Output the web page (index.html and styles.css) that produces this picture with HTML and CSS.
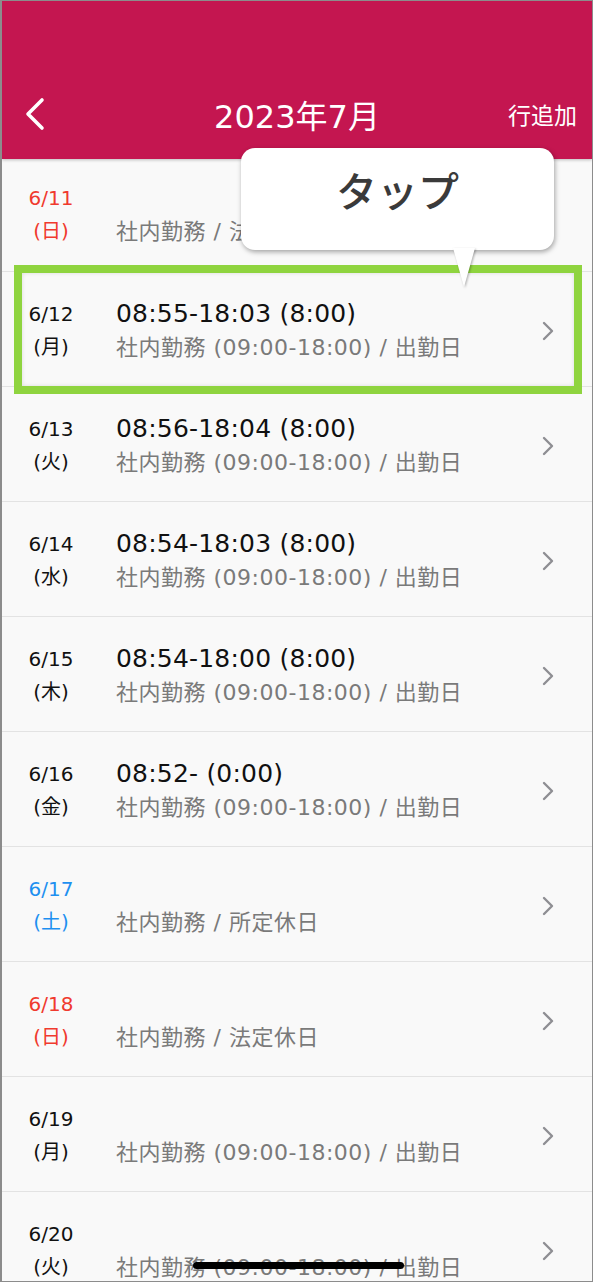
FILE: index.html
```html
<!DOCTYPE html>
<html lang="ja">
<head>
    <meta charset="UTF-8">
    <meta name="viewport" content="width=device-width, initial-scale=1">
    <title>勤怠 2023年7月</title>
    <link rel="stylesheet" href="styles.css">
</head>
<body>
    <div class="screen">
        <header class="topbar">
            <div class="nav">
                <div class="side">
                    <svg class="back" width="24" height="34" viewBox="0 0 24 34">
                        <path d="M19 3 L5 17 L19 31" fill="none" stroke="#fff" stroke-width="3.6" stroke-linecap="round" stroke-linejoin="round"/>
                    </svg>
                </div>
                <h1 class="title">2023年7月</h1>
                <div class="side right"><span class="add">行追加</span></div>
            </div>
        </header>

        <div class="list">
            <div class="row first">
                <div class="date sun"><span>6/11</span><span>(日)</span></div>
                <div class="info">
                    <div class="time"></div>
                    <div class="sub">社内勤務 / 法定休日</div>
                </div>
                <svg class="chev" width="14" height="22" viewBox="0 0 14 22"><path d="M3 3 L11 11 L3 19" fill="none" stroke="#8e8e93" stroke-width="2.4" stroke-linecap="round" stroke-linejoin="round"/></svg>
            </div>
            <div class="row picked">
                <div class="date"><span>6/12</span><span>(月)</span></div>
                <div class="info">
                    <div class="time">08:55-18:03 (8:00)</div>
                    <div class="sub">社内勤務 (09:00-18:00) / 出勤日</div>
                </div>
                <svg class="chev" width="14" height="22" viewBox="0 0 14 22"><path d="M3 3 L11 11 L3 19" fill="none" stroke="#8e8e93" stroke-width="2.4" stroke-linecap="round" stroke-linejoin="round"/></svg>
            </div>
            <div class="row">
                <div class="date"><span>6/13</span><span>(火)</span></div>
                <div class="info">
                    <div class="time">08:56-18:04 (8:00)</div>
                    <div class="sub">社内勤務 (09:00-18:00) / 出勤日</div>
                </div>
                <svg class="chev" width="14" height="22" viewBox="0 0 14 22"><path d="M3 3 L11 11 L3 19" fill="none" stroke="#8e8e93" stroke-width="2.4" stroke-linecap="round" stroke-linejoin="round"/></svg>
            </div>
            <div class="row">
                <div class="date"><span>6/14</span><span>(水)</span></div>
                <div class="info">
                    <div class="time">08:54-18:03 (8:00)</div>
                    <div class="sub">社内勤務 (09:00-18:00) / 出勤日</div>
                </div>
                <svg class="chev" width="14" height="22" viewBox="0 0 14 22"><path d="M3 3 L11 11 L3 19" fill="none" stroke="#8e8e93" stroke-width="2.4" stroke-linecap="round" stroke-linejoin="round"/></svg>
            </div>
            <div class="row">
                <div class="date"><span>6/15</span><span>(木)</span></div>
                <div class="info">
                    <div class="time">08:54-18:00 (8:00)</div>
                    <div class="sub">社内勤務 (09:00-18:00) / 出勤日</div>
                </div>
                <svg class="chev" width="14" height="22" viewBox="0 0 14 22"><path d="M3 3 L11 11 L3 19" fill="none" stroke="#8e8e93" stroke-width="2.4" stroke-linecap="round" stroke-linejoin="round"/></svg>
            </div>
            <div class="row">
                <div class="date"><span>6/16</span><span>(金)</span></div>
                <div class="info">
                    <div class="time">08:52- (0:00)</div>
                    <div class="sub">社内勤務 (09:00-18:00) / 出勤日</div>
                </div>
                <svg class="chev" width="14" height="22" viewBox="0 0 14 22"><path d="M3 3 L11 11 L3 19" fill="none" stroke="#8e8e93" stroke-width="2.4" stroke-linecap="round" stroke-linejoin="round"/></svg>
            </div>
            <div class="row">
                <div class="date sat"><span>6/17</span><span>(土)</span></div>
                <div class="info">
                    <div class="time"></div>
                    <div class="sub">社内勤務 / 所定休日</div>
                </div>
                <svg class="chev" width="14" height="22" viewBox="0 0 14 22"><path d="M3 3 L11 11 L3 19" fill="none" stroke="#8e8e93" stroke-width="2.4" stroke-linecap="round" stroke-linejoin="round"/></svg>
            </div>
            <div class="row">
                <div class="date sun"><span>6/18</span><span>(日)</span></div>
                <div class="info">
                    <div class="time"></div>
                    <div class="sub">社内勤務 / 法定休日</div>
                </div>
                <svg class="chev" width="14" height="22" viewBox="0 0 14 22"><path d="M3 3 L11 11 L3 19" fill="none" stroke="#8e8e93" stroke-width="2.4" stroke-linecap="round" stroke-linejoin="round"/></svg>
            </div>
            <div class="row">
                <div class="date"><span>6/19</span><span>(月)</span></div>
                <div class="info">
                    <div class="time"></div>
                    <div class="sub">社内勤務 (09:00-18:00) / 出勤日</div>
                </div>
                <svg class="chev" width="14" height="22" viewBox="0 0 14 22"><path d="M3 3 L11 11 L3 19" fill="none" stroke="#8e8e93" stroke-width="2.4" stroke-linecap="round" stroke-linejoin="round"/></svg>
            </div>
            <div class="row">
                <div class="date"><span>6/20</span><span>(火)</span></div>
                <div class="info">
                    <div class="time"></div>
                    <div class="sub">社内勤務 (09:00-18:00) / 出勤日</div>
                </div>
                <svg class="chev" width="14" height="22" viewBox="0 0 14 22"><path d="M3 3 L11 11 L3 19" fill="none" stroke="#8e8e93" stroke-width="2.4" stroke-linecap="round" stroke-linejoin="round"/></svg>
            </div>
        </div>

        <!-- 吹き出し -->
        <div class="bubble">タップ</div>
        <div class="home-bar"></div>
    </div>
</body>
</html>
```

FILE: styles.css
```css
* {
    box-sizing: border-box;
}
html, body {
    margin: 0;
    padding: 0;
}
body {
    font-family: "DejaVu Sans", "Noto Sans CJK JP", sans-serif;
    background: #fff;
}
.screen {
    position: relative;
    width: 593px;
    height: 1282px;
    overflow: hidden;
    border: 1px solid #8c8c8c;
    border-left-width: 2px;
    background: #f9f9f9;
}
.topbar {
    height: 158px;
    background: #c41650;
    display: flex;
    align-items: flex-end;
    box-shadow: 0 1px 3px rgba(0,0,0,0.25);
    position: relative;
    z-index: 1;
}
.nav {
    width: 100%;
    height: 76px;
    display: flex;
    align-items: center;
    padding: 0 15px 15px 21px;
}
.side {
    width: 74px;
    display: flex;
    align-items: center;
}
.side.right {
    justify-content: flex-end;
}
.back {
    display: block;
}
.title {
    flex: 1;
    margin: 0;
    text-align: center;
    color: #fff;
    font-size: 32px;
    font-weight: 400;
    padding-right: 6px;
}
.add {
    color: #fff;
    font-size: 23px;
    font-family: "Noto Sans CJK JP", sans-serif;
}
.list {
    display: flex;
    flex-direction: column;
}
.row {
    height: 115px;
    display: flex;
    align-items: center;
    border-bottom: 1px solid #e3e3e3;
    padding: 4px 37px 0 23px;
}
.row.first {
    height: 113px;
    padding-top: 0;
}
.date {
    width: 52px;
    display: flex;
    flex-direction: column;
    align-items: center;
    font-size: 20px;
    line-height: 33px;
    color: #111;
}
.date.sun {
    color: #f03a2e;
}
.date.sat {
    color: #1e90f0;
}
.info {
    flex: 1;
    padding-left: 39px;
}
.time {
    height: 34px;
    font-size: 25px;
    line-height: 34px;
    color: #111;
    letter-spacing: 0.2px;
}
.sub {
    font-size: 22px;
    line-height: 34px;
    color: #7a7a7a;
    letter-spacing: 0.5px;
}
.chev {
    display: block;
}
.picked {
    position: relative;
}
.picked::after {
    content: "";
    position: absolute;
    left: 12px;
    right: 10px;
    top: -7px;
    bottom: -8px;
    border: 8px solid #8fd43f;
    box-shadow: inset 0 0 4px rgba(0,0,0,0.12);
}
.bubble {
    position: absolute;
    left: 239px;
    top: 147px;
    width: 313px;
    height: 102px;
    background: #fff;
    border-radius: 14px;
    box-shadow: 1px 2px 5px rgba(0,0,0,0.35);
    font-family: "Noto Sans CJK JP", sans-serif;
    font-size: 41px;
    font-weight: 500;
    color: #3a3a3a;
    text-align: center;
    line-height: 82px;
    z-index: 2;
}
.bubble::after {
    content: "";
    position: absolute;
    left: 212px;
    top: 100px;
    border-left: 11px solid transparent;
    border-right: 11px solid transparent;
    border-top: 39px solid #fff;
    filter: drop-shadow(1px 1px 1px rgba(0,0,0,0.3));
}
.home-bar {
    position: absolute;
    left: 191px;
    top: 1261px;
    width: 211px;
    height: 7px;
    border-radius: 4px;
    background: #000;
    z-index: 2;
}
```
